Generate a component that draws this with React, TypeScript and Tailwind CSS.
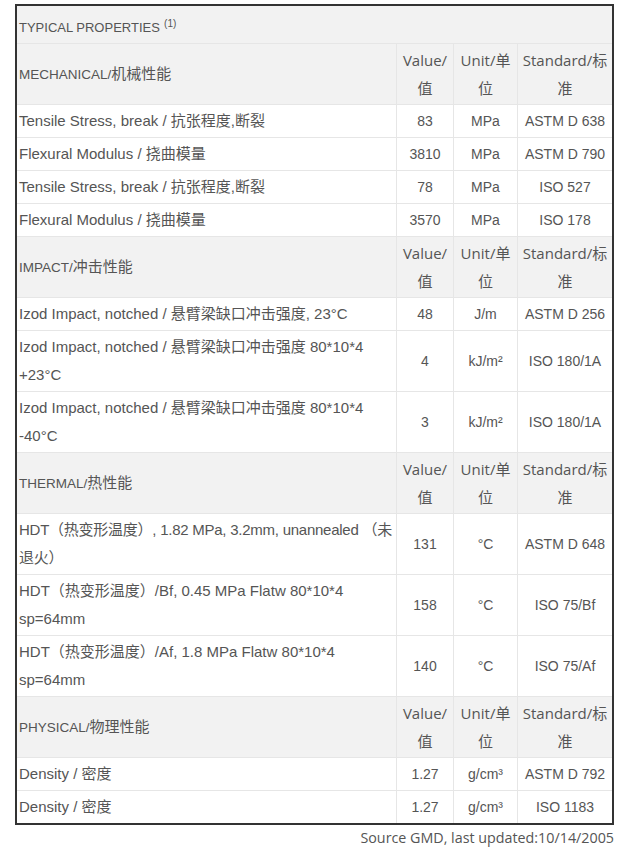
const body = "font-['Liberation_Sans','Noto_Sans_CJK_SC',sans-serif]";
const head = "font-['Open_Sans','Noto_Sans_CJK_SC',sans-serif]";

type Row = [string, string, string, string, boolean?];

const sections: { en: string; zh: string; rows: Row[] }[] = [
  {
    en: 'MECHANICAL/',
    zh: '机械性能',
    rows: [
      ['Tensile Stress, break / 抗张程度,断裂', '83', 'MPa', 'ASTM D 638'],
      ['Flexural Modulus / 挠曲模量', '3810', 'MPa', 'ASTM D 790'],
      ['Tensile Stress, break / 抗张程度,断裂', '78', 'MPa', 'ISO 527'],
      ['Flexural Modulus / 挠曲模量', '3570', 'MPa', 'ISO 178'],
    ],
  },
  {
    en: 'IMPACT/',
    zh: '冲击性能',
    rows: [
      ['Izod Impact, notched / 悬臂梁缺口冲击强度, 23°C', '48', 'J/m', 'ASTM D 256'],
      ['Izod Impact, notched / 悬臂梁缺口冲击强度 80*10*4 +23°C', '4', 'kJ/m²', 'ISO 180/1A'],
      ['Izod Impact, notched / 悬臂梁缺口冲击强度 80*10*4 -40°C', '3', 'kJ/m²', 'ISO 180/1A'],
    ],
  },
  {
    en: 'THERMAL/',
    zh: '热性能',
    rows: [
      ['HDT（热变形温度）, 1.82 MPa, 3.2mm, unannealed （未退火）', '131', '°C', 'ASTM D 648', true],
      ['HDT（热变形温度）/Bf, 0.45 MPa Flatw 80*10*4 sp=64mm', '158', '°C', 'ISO 75/Bf'],
      ['HDT（热变形温度）/Af, 1.8 MPa Flatw 80*10*4 sp=64mm', '140', '°C', 'ISO 75/Af'],
    ],
  },
  {
    en: 'PHYSICAL/',
    zh: '物理性能',
    rows: [
      ['Density / 密度', '1.27', 'g/cm³', 'ASTM D 792'],
      ['Density / 密度', '1.27', 'g/cm³', 'ISO 1183'],
    ],
  },
];

const App = () => {
  return (
    <div className={`min-h-screen bg-white pt-[4px] ${body} text-[#555]`}>
      <div className="ml-[15px] w-[599px] border-2 border-[#333]">
        <div className="grid grid-cols-[380px_57px_64px_94px] text-[15px] leading-[28px]">
          {/* title */}
          <div className="col-span-4 bg-[#f2f2f2] border-b border-[#e6e6e6] pl-[2px] pt-[7px] pb-[1px]">
            <span className="text-[13px]">TYPICAL PROPERTIES</span>{' '}
            <sup className="text-[10px]">(1)</sup>
          </div>

          {sections.map((sec, si) => (
            <div key={sec.en} className="contents">
              {/* section header */}
              <div className="bg-[#f2f2f2] border-b border-r border-[#e6e6e6] flex items-center px-[2px] py-[2px]">
                <span>
                  <span className="text-[13.5px]">{sec.en}</span>
                  {sec.zh}
                </span>
              </div>
              <div className={`bg-[#f2f2f2] border-b border-r border-[#e6e6e6] flex items-center justify-center text-center px-[2px] py-[2px] ${head}`}>
                Value/值
              </div>
              <div className={`bg-[#f2f2f2] border-b border-r border-[#e6e6e6] flex items-center justify-center text-center px-[2px] py-[2px] ${head}`}>
                Unit/单位
              </div>
              <div className={`bg-[#f2f2f2] border-b border-[#e6e6e6] flex items-center justify-center text-center px-[2px] py-[2px] ${head}`}>
                Standard/标准
              </div>

              {sec.rows.map((r, ri) => {
                const last = si === sections.length - 1 && ri === sec.rows.length - 1;
                const b = last ? '' : 'border-b';
                return (
                  <div key={ri} className="contents">
                    <div className={`${b} border-r border-[#e6e6e6] flex items-center px-[2px] py-[2px]`}>
                      <span className={r[4] ? 'tracking-[-0.25px]' : ''}>{r[0]}</span>
                    </div>
                    <div className={`${b} border-r border-[#e6e6e6] flex items-center justify-center px-[2px] py-[2px] text-[14px]`}>
                      {r[1]}
                    </div>
                    <div className={`${b} border-r border-[#e6e6e6] flex items-center justify-center px-[2px] py-[2px] text-[14px]`}>
                      {r[2]}
                    </div>
                    <div className={`${b} border-[#e6e6e6] flex items-center justify-center text-center px-[2px] py-[2px] text-[14px]`}>
                      {r[3]}
                    </div>
                  </div>
                );
              })}
            </div>
          ))}
        </div>
      </div>

      {/* footer */}
      <div className={`w-[614px] text-right text-[14.3px] leading-[24px] mt-[1px] ${head}`}>
        Source GMD, last updated:10/14/2005
      </div>
    </div>
  );
};

export default App;
